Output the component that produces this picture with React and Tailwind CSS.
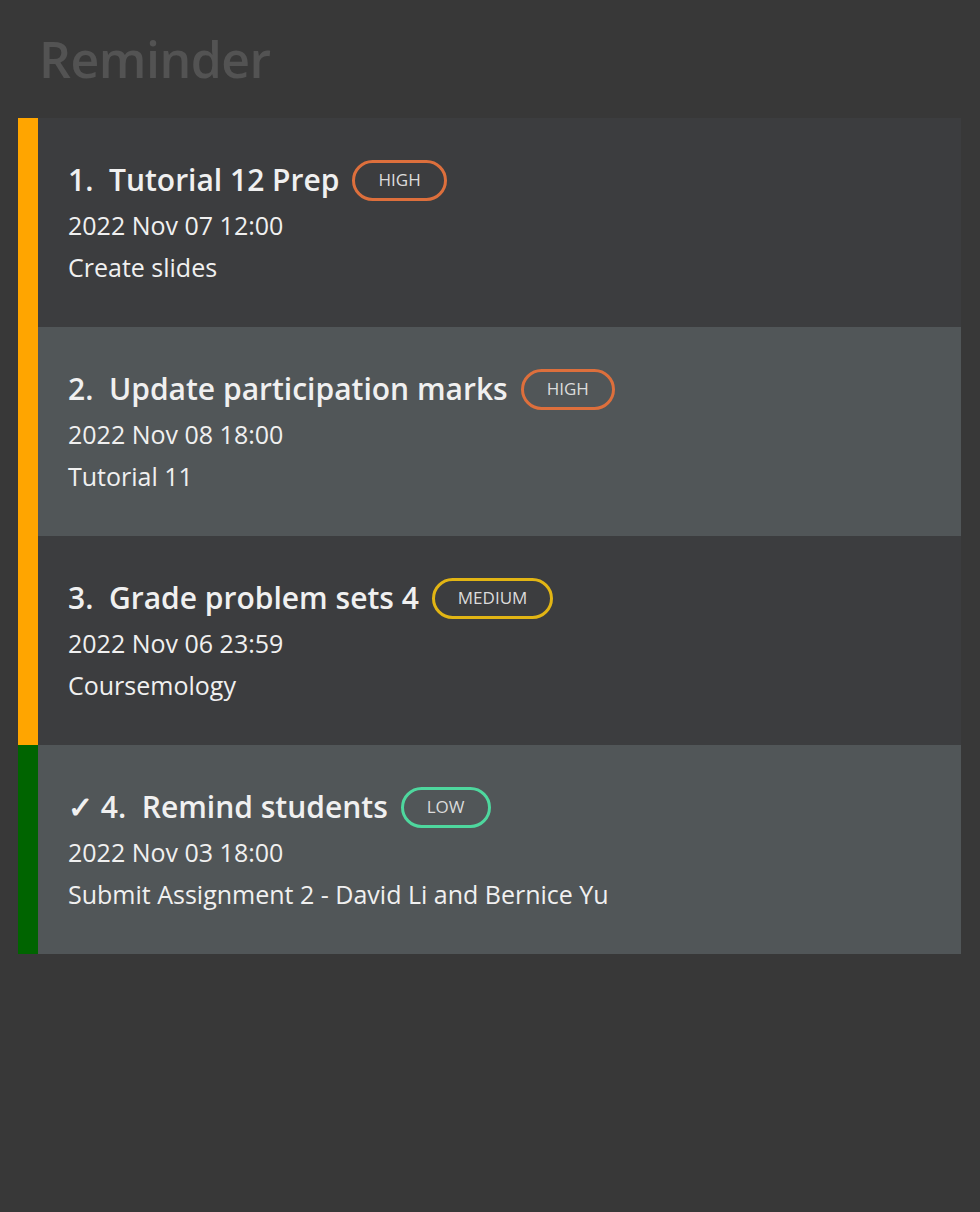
const reminders = [
  { n: 1, title: 'Tutorial 12 Prep', priority: 'HIGH', date: '2022 Nov 07 12:00', desc: 'Create slides', done: false },
  { n: 2, title: 'Update participation marks', priority: 'HIGH', date: '2022 Nov 08 18:00', desc: 'Tutorial 11', done: false },
  { n: 3, title: 'Grade problem sets 4', priority: 'MEDIUM', date: '2022 Nov 06 23:59', desc: 'Coursemology', done: false },
  { n: 4, title: 'Remind students', priority: 'LOW', date: '2022 Nov 03 18:00', desc: 'Submit Assignment 2 - David Li and Bernice Yu', done: true },
];

const badgeStyles = {
  HIGH: 'border-[#dd6f3c]',
  MEDIUM: 'border-[#e2b514]',
  LOW: 'border-[#4ed79e]',
};

function PriorityBadge({ level }) {
  return (
    <span
      className={`inline-flex items-center justify-center h-[41px] px-[23px] rounded-full border-[3px] text-[17px] text-[#dcdcdc] ${badgeStyles[level]}`}
    >
      {level}
    </span>
  );
}

function ReminderRow({ item, index }) {
  const rowBg = index % 2 === 0 ? 'bg-[#3c3d3f]' : 'bg-[#515658]';
  const bar = item.done ? 'bg-[#006400]' : 'bg-[#ffa500]';
  return (
    <div className="flex h-[209px]">
      <div className={`w-[20px] shrink-0 ${bar}`} />
      <div className={`flex-1 flex flex-col justify-center pl-[30px] pb-[3px] ${rowBg}`}>
        <div className="flex items-center gap-[13px] text-[#f0f0f0]">
          <span className="text-[30px] font-semibold leading-[40px] whitespace-pre">
            {item.done ? '✓ ' : ''}{item.n}.{'  '}{item.title}
          </span>
          <PriorityBadge level={item.priority} />
        </div>
        <div className="text-[25px] leading-[32px] text-[#f0f0f0] mt-[8px]">{item.date}</div>
        <div className="text-[25px] leading-[32px] text-[#f0f0f0] mt-[10px]">{item.desc}</div>
      </div>
    </div>
  );
}

export default function App() {
  return (
    <div
      className="min-h-[1212px] bg-[#383838] pt-[20px] px-[18px]"
      style={{ fontFamily: '"Open Sans", "Noto Sans", sans-serif' }}
    >
      <h1 className="pl-[21px] text-[50px] font-semibold leading-[78px] text-[#535353] tracking-[-0.5px]">Reminder</h1>
      <div className="mt-[20px] w-[943px]">
        {reminders.map((r, i) => (
          <ReminderRow key={r.n} item={r} index={i} />
        ))}
      </div>
    </div>
  );
}
